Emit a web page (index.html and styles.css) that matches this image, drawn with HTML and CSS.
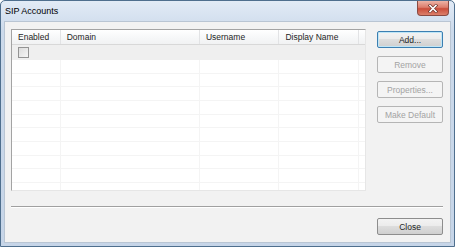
FILE: index.html
```html
<!DOCTYPE html>
<html lang="en">
<head>
    <meta charset="UTF-8">
    <title>SIP Accounts</title>
    <link rel="stylesheet" href="styles.css">
</head>
<body>
    <div class="window">
        <!-- Barra de título -->
        <div class="titlebar">
            <span class="title">SIP Accounts</span>
            <a class="btn-fechar" href="#">
                <svg width="12" height="9" viewBox="0 0 12 9">
                    <path d="M3 1.5 L9 7.5 M9 1.5 L3 7.5" stroke="#6b3129" stroke-width="3" stroke-linecap="square"/>
                    <path d="M3 1.5 L9 7.5 M9 1.5 L3 7.5" stroke="#ffffff" stroke-width="1.6" stroke-linecap="square"/>
                </svg>
            </a>
        </div>

        <div class="client">
            <div class="top">
                <!-- Lista de contas -->
                <div class="list">
                    <div class="row header">
                        <div class="cell c-enabled">Enabled</div>
                        <div class="cell c-domain">Domain</div>
                        <div class="cell c-user">Username</div>
                        <div class="cell c-display">Display Name</div>
                        <div class="cell c-fill"></div>
                    </div>
                    <div class="row first">
                        <div class="cell c-enabled"><span class="checkbox"></span></div>
                        <div class="cell c-domain"></div>
                        <div class="cell c-user"></div>
                        <div class="cell c-display"></div>
                        <div class="cell c-fill"></div>
                    </div>
                    <div class="row"><div class="cell c-enabled"></div><div class="cell c-domain"></div><div class="cell c-user"></div><div class="cell c-display"></div><div class="cell c-fill"></div></div>
                    <div class="row"><div class="cell c-enabled"></div><div class="cell c-domain"></div><div class="cell c-user"></div><div class="cell c-display"></div><div class="cell c-fill"></div></div>
                    <div class="row"><div class="cell c-enabled"></div><div class="cell c-domain"></div><div class="cell c-user"></div><div class="cell c-display"></div><div class="cell c-fill"></div></div>
                    <div class="row"><div class="cell c-enabled"></div><div class="cell c-domain"></div><div class="cell c-user"></div><div class="cell c-display"></div><div class="cell c-fill"></div></div>
                    <div class="row"><div class="cell c-enabled"></div><div class="cell c-domain"></div><div class="cell c-user"></div><div class="cell c-display"></div><div class="cell c-fill"></div></div>
                    <div class="row"><div class="cell c-enabled"></div><div class="cell c-domain"></div><div class="cell c-user"></div><div class="cell c-display"></div><div class="cell c-fill"></div></div>
                    <div class="row"><div class="cell c-enabled"></div><div class="cell c-domain"></div><div class="cell c-user"></div><div class="cell c-display"></div><div class="cell c-fill"></div></div>
                    <div class="row"><div class="cell c-enabled"></div><div class="cell c-domain"></div><div class="cell c-user"></div><div class="cell c-display"></div><div class="cell c-fill"></div></div>
                    <div class="row"><div class="cell c-enabled"></div><div class="cell c-domain"></div><div class="cell c-user"></div><div class="cell c-display"></div><div class="cell c-fill"></div></div>
                    <div class="row last"><div class="cell c-enabled"></div><div class="cell c-domain"></div><div class="cell c-user"></div><div class="cell c-display"></div><div class="cell c-fill"></div></div>
                </div>

                <!-- Botões laterais -->
                <div class="actions">
                    <button class="btn default">Add...</button>
                    <button class="btn" disabled>Remove</button>
                    <button class="btn" disabled>Properties...</button>
                    <button class="btn" disabled>Make Default</button>
                </div>
            </div>

            <div class="separator"></div>

            <div class="bottom">
                <button class="btn">Close</button>
            </div>
        </div>
    </div>
</body>
</html>
```

FILE: styles.css
```css
/* Janela no estilo Windows 7 */
body {
  margin: 0;
  padding: 0;
  font-family: "Liberation Sans", Arial, sans-serif;
  font-size: 8.5px;
  color: #1e1e1e;
}

.window {
  width: 455px;
  height: 247px;
  box-sizing: border-box;
  border: 1px solid #4f6f8e;
  border-radius: 5px 5px 0 0;
  background: linear-gradient(#e2ebf6, #ccdaeb 30px, #c6d5e8);
  display: flex;
  flex-direction: column;
  overflow: hidden;
}

/* Barra de título */
.titlebar {
  height: 19px;
  display: flex;
  align-items: center;
  justify-content: space-between;
  padding-left: 4px;
}

.title {
  font-size: 9px;
  color: #000;
  margin-top: 1px;
}

.btn-fechar {
  width: 32px;
  height: 15px;
  margin-right: 5px;
  margin-top: -4px;
  box-sizing: border-box;
  border: 1px solid #8a4a42;
  border-top: none;
  border-radius: 0 0 4px 4px;
  background: linear-gradient(#edb3a6, #dc7d6c 45%, #ca4d3a 55%, #dc806b);
  display: flex;
  align-items: center;
  justify-content: center;
}

/* Área interna */
.client {
  flex: 1;
  margin: 1px 3px 3px 3px;
  border: 1px solid #b9c5d3;
  background-color: #f2f2f2;
  padding: 7px 7px 0 6px;
}

.top {
  display: flex;
  align-items: flex-start;
}

.list {
  width: 355px;
  height: 162px;
  box-sizing: border-box;
  border: 1px solid #a3a3a3;
  border-right-color: #e6e6e6;
  border-bottom-color: #e6e6e6;
  background-color: #fff;
  overflow: hidden;
}

.row {
  display: flex;
  height: 13.67px;
  box-sizing: border-box;
  border-bottom: 1px solid #f4f4f4;
}

.row.header {
  height: 15px;
  border-bottom: 1px solid #d8d8d8;
  background: linear-gradient(#ffffff, #f7f8f9 50%, #f1f2f3);
}

.row.first {
  height: 15px;
  background-color: #efefef;
  border-bottom: none;
}

.row.last {
  border-bottom: none;
}

.cell {
  box-sizing: border-box;
  border-right: 1px solid #f4f4f4;
  padding-left: 6px;
  display: flex;
  align-items: center;
  white-space: nowrap;
}

.header .cell {
  border-right: 1px solid #e2e3e5;
}

.first .cell {
  border-right-color: #efefef;
}

.c-enabled { width: 49px; }
.c-domain { width: 140px; }
.c-user { width: 80px; }
.c-display { width: 80px; }
.c-fill { flex: 1; border-right: none; }
.header .c-fill { border-right: none; }

.checkbox {
  width: 11px;
  height: 11px;
  box-sizing: border-box;
  border: 1px solid #939393;
  background: linear-gradient(135deg, #dcdcdc, #f6f6f6);
}

/* Botões */
.actions {
  margin-left: 11px;
  margin-top: 2px;
  display: flex;
  flex-direction: column;
  gap: 8px;
}

.btn {
  width: 66px;
  height: 17px;
  box-sizing: border-box;
  padding: 0;
  font-family: "Liberation Sans", Arial, sans-serif;
  font-size: 8.5px;
  color: #1e1e1e;
  border: 1px solid #8d8d8d;
  border-radius: 2px;
  background: linear-gradient(#f3f3f3, #ebebeb 50%, #dddddd 50%, #cfcfcf);
}

.btn.default {
  border-color: #3c7fb1;
  box-shadow: inset 0 0 0 1px #bfe6f7;
}

.btn:disabled {
  color: #a3a3a3;
  border-color: #b5b5b5;
  background: #f4f4f4;
}

.separator {
  margin-top: 15px;
  width: 432px;
  height: 1px;
  background-color: #a0a0a0;
  border-bottom: 1px solid #fff;
}

.bottom {
  margin-top: 10px;
  width: 432px;
  display: flex;
  justify-content: flex-end;
}
```
